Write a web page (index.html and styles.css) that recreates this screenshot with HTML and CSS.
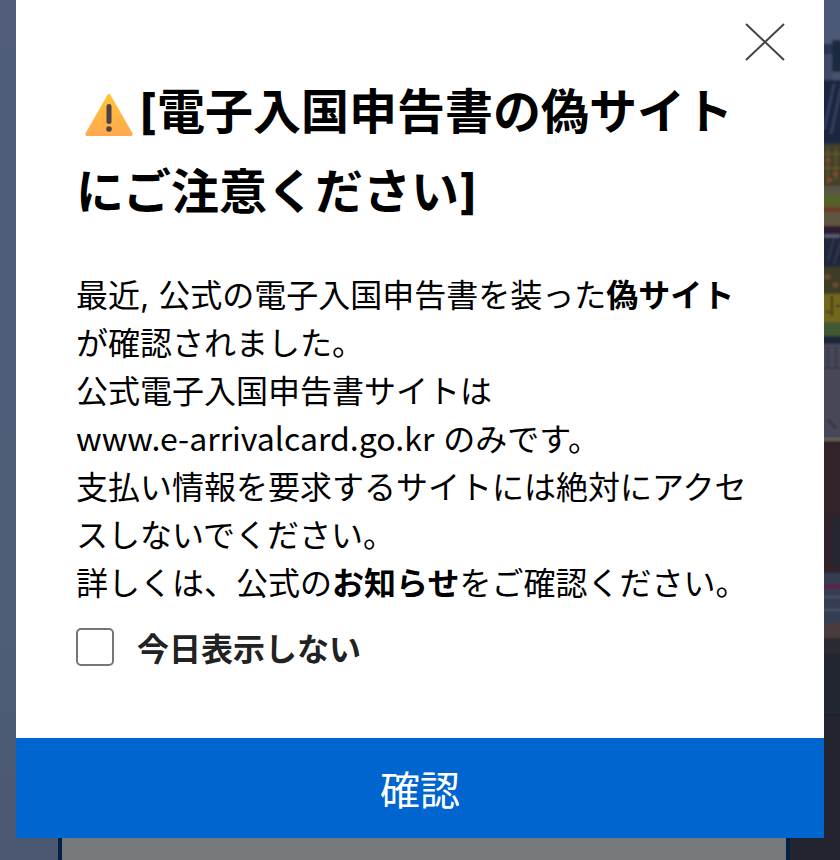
FILE: index.html
```
<!DOCTYPE html>
<html lang="ja">
<head>
  <meta charset="UTF-8" />
  <meta name="viewport" content="width=device-width, initial-scale=1.0"/>
  <title>電子入国申告書</title>
  <link rel="stylesheet" href="styles.css">
</head>
<body>

<div class="scene" aria-hidden="true">
  <svg class="palace" viewBox="0 0 50 860" preserveAspectRatio="none">
    <defs>
      <filter id="soft"><feGaussianBlur stdDeviation="1"/></filter>
    </defs>
    <rect width="50" height="860" fill="#23242f"/>
    <g filter="url(#soft)">
      <rect y="-4" width="54" height="50" fill="#4b5877"/>
      <!-- upper roof -->
      <rect y="44" width="54" height="10" fill="#2b3650"/>
      <rect x="42" y="40" width="12" height="32" fill="#1d2941"/>
      <rect y="54" width="42" height="26" fill="#3d4966"/>
      <rect x="42" y="72" width="12" height="8" fill="#46526d"/>
      <rect y="80" width="54" height="64" fill="#1c2640"/>
      <path d="M34 130L44 84M41 134L51 88" stroke="#3a4663" stroke-width="2"/>
      <!-- painted eaves -->
      <rect y="144" width="54" height="42" fill="#45412a"/>
      <path d="M34 154H50M34 168H50M38 148V184M46 148V180" stroke="#74672c" stroke-width="1"/>
      <path d="M36 160H40M43 174H48M37 180H42" stroke="#8a4a35" stroke-width="3"/>
      <rect y="186" width="54" height="8" fill="#595747"/>
      <rect y="194" width="54" height="13" fill="#566029"/>
      <rect y="207" width="54" height="5" fill="#6c3a2b"/>
      <rect y="212" width="54" height="14" fill="#5d553f"/>
      <rect y="226" width="54" height="7" fill="#311c30"/>
      <!-- lower roof -->
      <rect y="233" width="54" height="34" fill="#20283c"/>
      <path d="M34 236H50" stroke="#626477" stroke-width="3"/>
      <path d="M38 260L44 238M44 264L51 242" stroke="#434a60" stroke-width="1"/>
      <rect y="267" width="54" height="27" fill="#3c3e28"/>
      <path d="M34 277H40M43 285H48" stroke="#715034" stroke-width="4"/>
      <rect y="294" width="54" height="28" fill="#72671c"/>
      <path d="M36 312H40M46 306H50M42 296V316" stroke="#3c321d" stroke-width="2"/>
      <rect y="322" width="54" height="14" fill="#435932"/>
      <rect y="336" width="54" height="8" fill="#1d2739"/>
      <!-- wall -->
      <rect y="344" width="54" height="94" fill="#474758"/>
      <path d="M34 368H50M38 346V368M46 346V368" stroke="#383a4b" stroke-width="2"/>
      <path d="M38 420L46 428" stroke="#363546" stroke-width="3"/>
      <rect y="438" width="54" height="3" fill="#686354"/>
      <rect y="441" width="54" height="132" fill="#33232b"/>
      <rect x="42" y="516" width="12" height="50" fill="#252630"/>
      <rect y="573" width="54" height="50" fill="#363e52"/>
      <rect y="584" width="54" height="5" fill="#552846"/>
      <path d="M34 597H50M34 610H50" stroke="#4c5265" stroke-width="2"/>
      <rect y="623" width="54" height="15" fill="#493c3d"/>
      <rect y="638" width="54" height="16" fill="#2b2930"/>
      <rect y="654" width="54" height="60" fill="#20262f"/>
    </g>
  </svg>
</div>

<form class="popup" role="dialog" aria-labelledby="popupTitle">
  <button class="close" type="button" aria-label="閉じる">
    <svg viewBox="0 0 40 38"><path d="M1 1L39 37M39 1L1 37"/></svg>
  </button>
  <div class="popup-body">
    <h1 id="popupTitle"><svg class="warning" viewBox="0 0 48 44" aria-hidden="true">
      <defs>
        <linearGradient id="amber" x1="0" y1="0" x2="0" y2="1">
          <stop offset="0" stop-color="#ffc533"/>
          <stop offset="1" stop-color="#ffa850"/>
        </linearGradient>
      </defs>
      <path fill="url(#amber)" d="M22.300 2.200Q24 -0.500 25.700 2.200L47.300 40Q48.500 43 45.500 43H2.500Q-0.500 43 0.700 40Z"/>
      <rect x="21.500" y="11" width="5" height="20" rx="2.500" fill="#4b4148"/>
      <circle cx="24" cy="36" r="2.800" fill="#4b4148"/>
    </svg>[電子入国申告書の偽サイトにご注意ください]</h1>
    <p>
      最近, 公式の電子入国申告書を装った<strong>偽サイト</strong>が確認されました。<br>
      公式電子入国申告書サイトは<br>
      <span class="url">www.e-arrivalcard.go.kr</span> のみです。<br>
      支払い情報を要求するサイトには絶対にアクセスしないでください。<br>
      詳しくは、公式の<strong>お知らせ</strong>をご確認ください。
    </p>
    <div class="today">
      <input type="checkbox" id="hideToday">
      <label for="hideToday">今日表示しない</label>
    </div>
  </div>
  <button class="confirm" type="button">確認</button>
</form>

<div class="page-card"></div>

</body>
</html>
```
FILE: styles.css
```
:root {
  --blue: #0065cf;
  --text: #000;
}

* {
  box-sizing: border-box;
  margin: 0;
  padding: 0;
}

body {
  min-height: 100vh;
  display: flex;
  flex-direction: column;
  font-family: Inter, "Noto Sans CJK JP", sans-serif;
  color: var(--text);
}

button {
  border: 0;
  font-family: inherit;
  cursor: pointer;
}

.scene {
  position: fixed;
  inset: 0;
  z-index: -1;
  display: flex;
  justify-content: flex-end;
  background: linear-gradient(#515d7b, #4e5d79 20%, #4f5d76 70%, #4c5871);
}

.palace {
  width: 50px;
  height: 100%;
}

.popup {
  position: relative;
  margin: 0 16px;
  background: #fff;
}

.close {
  position: absolute;
  top: 23px;
  right: 39px;
  width: 40px;
  height: 38px;
  background: none;
}

.close svg {
  display: block;
  fill: none;
  stroke: #444;
  stroke-width: 2;
}

.popup-body {
  padding: 72px 60px 66px;
}

h1 {
  margin-bottom: 40px;
  font-size: 48px;
  line-height: 80px;
}

.warning {
  width: 48px;
  height: 44px;
  margin: 0 6px 0 9px;
  vertical-align: -8px;
}

p {
  font-size: 32px;
  line-height: 48px;
}

.url {
  font-family: "Noto Sans CJK JP", sans-serif;
  line-height: 1;
}

.today {
  display: flex;
  align-items: flex-start;
  gap: 23px;
  margin-top: 20px;
  color: #222;
  font-size: 32px;
  font-weight: bold;
  line-height: 44px;
}

.today input {
  appearance: none;
  width: 38px;
  height: 38px;
  border: 2px solid #767676;
  border-radius: 5px;
  background: #fff;
}

.today input:checked {
  background: var(--blue);
}

.confirm {
  display: block;
  width: 100%;
  height: 100px;
  background: var(--blue);
  color: #fff;
  font-size: 40px;
}

.page-card {
  flex: 1;
  min-height: 22px;
  margin: 0 50px 0 58px;
  border: solid #002247;
  border-width: 0 4px;
  background: #777879;
}
```
